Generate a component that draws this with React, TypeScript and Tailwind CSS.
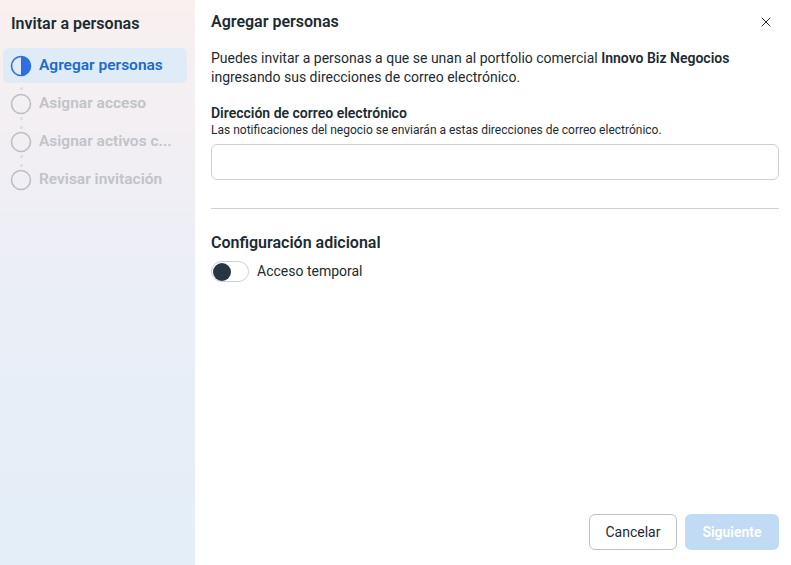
import { X } from 'lucide-react'

const steps = ['Asignar acceso', 'Asignar activos c...', 'Revisar invitación']

function HalfCircle() {
  return (
    <svg width="22" height="22" viewBox="0 0 22 22" className="shrink-0">
      <circle cx="11" cy="11" r="9.5" fill="none" stroke="#2f6fe4" strokeWidth="1.6" />
      <path d="M11 1.5 A9.5 9.5 0 0 1 11 20.5 Z" fill="#2f6fe4" />
    </svg>
  )
}

function EmptyCircle() {
  return (
    <svg width="22" height="22" viewBox="0 0 22 22" className="shrink-0">
      <circle cx="11" cy="11" r="9.5" fill="none" stroke="#bcc0c4" strokeWidth="1.6" />
    </svg>
  )
}

function Dot() {
  return <div className="ml-[20px] w-[3px] h-[3px] rounded-full bg-[#dadde1]" />
}

export default function App() {
  return (
    <div
      className="w-[791px] h-[565px] flex bg-white text-[#1c2b33] overflow-hidden"
      style={{ fontFamily: 'Roboto, "Noto Sans", sans-serif' }}
    >
      {/* Sidebar */}
      <div className="w-[195px] shrink-0 bg-gradient-to-b from-[#f9f0ef] via-[#ebeef7] to-[#e3eef8] flex flex-col">
        <div className="px-[11px] pt-[12px] h-[48px] text-[16px] font-semibold">Invitar a personas</div>
        <div className="mx-[3px] w-[184px] h-[35px] rounded-md bg-[#dfebf6] flex items-center gap-[7px] px-[7px]">
          <HalfCircle />
          <span className="text-[15.5px] font-semibold text-[#1b6ccd]">Agregar personas</span>
        </div>
        <div className="h-[11px] pt-[4px]">
          <Dot />
        </div>
        {steps.map((s, i) => (
          <div key={s} className="flex flex-col">
            {i > 0 && (
              <div className="h-[18px] pt-[3px] flex flex-col gap-[6px]">
                <Dot />
                <Dot />
              </div>
            )}
            <div className="mx-[3px] h-[20px] flex items-center gap-[7px] px-[7px]">
              <EmptyCircle />
              <span className="text-[15.5px] font-semibold text-[#c0c3c7] whitespace-nowrap">{s}</span>
            </div>
          </div>
        ))}
      </div>

      {/* Main */}
      <div className="flex-1 flex flex-col pl-[16px] pr-[12px]">
        <div className="flex items-center justify-between h-[44px]">
          <h2 className="text-[16px] font-semibold">Agregar personas</h2>
          <X size={16} strokeWidth={1.5} className="mr-[5px] text-[#1c2b33]" />
        </div>
        <p className="text-[14px] leading-[19px] mt-[5px] text-[#1c2b33]">
          Puedes invitar a personas a que se unan al portfolio comercial{' '}
          <span className="font-semibold">Innovo Biz Negocios</span> ingresando sus direcciones de correo
          electrónico.
        </p>
        <div className="mt-[17px] text-[14px] font-semibold leading-[18px]">Dirección de correo electrónico</div>
        <div className="text-[12px] leading-[16px] text-[#1c2b33]">
          Las notificaciones del negocio se enviarán a estas direcciones de correo electrónico.
        </div>
        <input className="mt-[6px] h-[36px] w-full rounded-md border border-[#ccd0d5] outline-none px-3 text-[14px]" />
        <div className="mt-[28px] border-t border-[#ced0d4]" />
        <h3 className="mt-[24px] text-[16px] font-semibold leading-[20px]">Configuración adicional</h3>
        <div className="mt-[8px] flex items-center gap-[8px]">
          <div className="w-[38px] h-[21px] rounded-full border border-[#ccd0d5] flex items-center px-[1px]">
            <div className="w-[18px] h-[18px] rounded-full bg-[#283542]" />
          </div>
          <span className="text-[14px]">Acceso temporal</span>
        </div>
        <div className="flex-1" />
        <div className="flex justify-end gap-[8px] pb-[15px]">
          <button className="h-[36px] w-[88px] rounded-md border border-[#bcc0c4] text-[14px] font-normal bg-white">
            Cancelar
          </button>
          <button className="h-[36px] w-[94px] rounded-md bg-[#c2dbf4] text-white text-[14px] font-semibold">
            Siguiente
          </button>
        </div>
      </div>
    </div>
  )
}
